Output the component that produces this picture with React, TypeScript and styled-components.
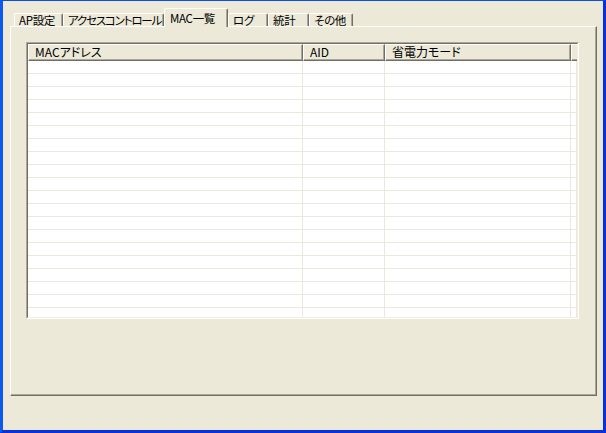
import React from 'react';
import styled, { createGlobalStyle } from 'styled-components';

const GlobalStyle = createGlobalStyle`
  html, body {
    margin: 0;
    padding: 0;
    background: #ECE9D8;
  }
  * {
    box-sizing: border-box;
  }
`;

const tabs = [
  { label: 'AP設定', width: 49, spacing: -0.3 },
  { label: 'アクセスコントロール', width: 101, spacing: -1.2 },
  { label: 'MAC一覧', width: 64, spacing: -0.3 },
  { label: 'ログ', width: 40, spacing: -0.3 },
  { label: '統計', width: 41, spacing: -0.3 },
  { label: 'その他', width: 44, spacing: -0.3 },
];

const columns = [
  { label: 'MACアドレス', width: 275 },
  { label: 'AID', width: 82 },
  { label: '省電力モード', width: 186 },
  { label: '', width: 6 },
];

const ROW_COUNT = 20;

function App() {
  const selected = 2;

  return (
    <>
      <GlobalStyle />
      <Window>
        <TabStrip>
          {tabs.map((tab, i) => (
            <Tab
              key={tab.label}
              $width={tab.width}
              $spacing={tab.spacing}
              $active={i === selected}
            >
              {tab.label}
            </Tab>
          ))}
        </TabStrip>
        <Panel>
          <ListFrame>
            <ListInner>
              <HeaderRow>
                {columns.map((col, i) => (
                  <HeaderCell key={i} $width={col.width}>
                    {col.label}
                  </HeaderCell>
                ))}
              </HeaderRow>
              {Array.from({ length: ROW_COUNT }).map((_, r) => (
                <Row key={r}>
                  {columns.map((col, i) => (
                    <Cell key={i} $width={col.width} />
                  ))}
                </Row>
              ))}
            </ListInner>
          </ListFrame>
        </Panel>
      </Window>
    </>
  );
}

export default App;

const Window = styled.div`
  width: 606px;
  height: 433px;
  background: #ECE9D8;
  border-top: 1px solid #0A4FE3;
  border-left: 3px solid #0B5AF0;
  border-right: 3px solid #0831D9;
  border-bottom: 3px solid #0831D9;
  padding: 7px 6px 0 7px;
  font-family: "Noto Sans CJK JP", "Liberation Sans", sans-serif;
  font-feature-settings: "palt";
  font-size: 12px;
  color: #000;
`;

const TabStrip = styled.div`
  position: relative;
  z-index: 1;
  display: flex;
  align-items: flex-end;
  height: 19px;
  padding-left: 4px;
`;

const Tab = styled.div<{ $width: number; $spacing: number; $active: boolean }>`
  width: ${(p) => p.$width}px;
  height: ${(p) => (p.$active ? 19 : 13)}px;
  margin-bottom: ${(p) => (p.$active ? 0 : 1)}px;
  background: #ECE9D8;
  border-top: 1px solid #FFFFFF;
  border-left: 1px solid #FFFFFF;
  border-right: 1px solid #716F64;
  box-shadow: inset -1px 0 0 #ACA899;
  border-top-left-radius: 2px;
  border-top-right-radius: 2px;
  padding: ${(p) => (p.$active ? '3px 0 0 5px' : '0 0 0 4px')};
  font-size: 11.5px;
  letter-spacing: ${(p) => p.$spacing}px;
  line-height: 12px;
  white-space: nowrap;
`;

const Panel = styled.div`
  width: 587px;
  height: 370px;
  margin-top: -1px;
  background: #ECE9D8;
  border-top: 1px solid #FFFFFF;
  border-left: 1px solid #FFFFFF;
  border-right: 1px solid #716F64;
  border-bottom: 1px solid #716F64;
  box-shadow: inset -1px -1px 0 #ACA899;
  padding: 15px 0 0 15px;
`;

const ListFrame = styled.div`
  width: 553px;
  height: 277px;
  border-top: 1px solid #ACA899;
  border-left: 1px solid #ACA899;
  border-right: 1px solid #FFFFFF;
  border-bottom: 1px solid #FFFFFF;
`;

const ListInner = styled.div`
  width: 100%;
  height: 100%;
  background: #FFFFFF;
  border-top: 1px solid #716F64;
  border-left: 1px solid #716F64;
  border-right: 1px solid #F1EFE2;
  border-bottom: 1px solid #F1EFE2;
  overflow: hidden;
`;

const HeaderRow = styled.div`
  display: flex;
  height: 17px;
  background: #ECE9D8;
`;

const HeaderCell = styled.div<{ $width: number }>`
  flex: 0 0 ${(p) => p.$width}px;
  height: 17px;
  background: #ECE9D8;
  border-top: 1px solid #FFFFFF;
  border-left: 1px solid #FFFFFF;
  border-right: 1px solid #716F64;
  border-bottom: 1px solid #716F64;
  box-shadow: inset -1px -1px 0 #ACA899;
  padding: 0 0 0 6px;
  line-height: 13px;
  white-space: nowrap;
`;

const Row = styled.div`
  display: flex;
  height: 13px;
`;

const Cell = styled.div<{ $width: number }>`
  flex: 0 0 ${(p) => p.$width}px;
  height: 13px;
  border-right: 1px solid #EBE9DD;
  border-bottom: 1px solid #EBE9DD;
`;
